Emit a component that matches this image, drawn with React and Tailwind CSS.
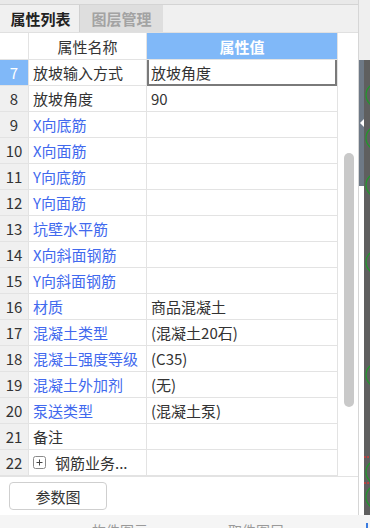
import React from "react";

const rows = [
  { n: 7, name: "放坡输入方式", value: "放坡角度", selected: true },
  { n: 8, name: "放坡角度", value: "90" },
  { n: 9, name: "X向底筋", blue: true },
  { n: 10, name: "X向面筋", blue: true },
  { n: 11, name: "Y向底筋", blue: true },
  { n: 12, name: "Y向面筋", blue: true },
  { n: 13, name: "坑壁水平筋", blue: true },
  { n: 14, name: "X向斜面钢筋", blue: true },
  { n: 15, name: "Y向斜面钢筋", blue: true },
  { n: 16, name: "材质", value: "商品混凝土", blue: true },
  { n: 17, name: "混凝土类型", value: "(混凝土20石)", blue: true },
  { n: 18, name: "混凝土强度等级", value: "(C35)", blue: true },
  { n: 19, name: "混凝土外加剂", value: "(无)", blue: true },
  { n: 20, name: "泵送类型", value: "(混凝土泵)", blue: true },
  { n: 21, name: "备注" },
  { n: 22, name: "钢筋业务...", expand: true },
];

const ExpandIcon = () => (
  <svg width="13" height="13" viewBox="0 0 13 13" className="shrink-0">
    <rect x="0.5" y="0.5" width="12" height="12" rx="2" fill="white" stroke="#8a8a8a" />
    <line x1="3.5" y1="6.5" x2="9.5" y2="6.5" stroke="#444" />
    <line x1="6.5" y1="3.5" x2="6.5" y2="9.5" stroke="#444" />
  </svg>
);

const Row = ({ row }) => (
  <div className="grid grid-cols-[29px_118px_190px] h-[26px] border-b border-[#e3e3e3]">
    <div
      className={
        row.selected
          ? "flex items-center justify-center bg-[#80b8f8] text-white border-r border-[#e3e3e3]"
          : "flex items-center justify-center bg-[#f0f0f0] text-[#333] border-r border-[#e3e3e3]"
      }
    >
      {row.n}
    </div>
    <div
      className={
        "flex items-center gap-[9px] pl-[4px] border-r border-[#e3e3e3] whitespace-nowrap overflow-hidden " +
        (row.blue ? "text-[#4169ee]" : "text-[#333]")
      }
    >
      {row.expand && <ExpandIcon />}
      {row.name}
    </div>
    <div
      className={
        row.selected
          ? "flex items-center pl-[2px] text-[#333] border-x-2 border-b-2 border-[#7a7a7a] -mb-px"
          : "flex items-center pl-[4px] text-[#333]"
      }
    >
      {row.value}
    </div>
  </div>
);

const Canvas = () => (
  <svg width="6" height="455" viewBox="0 0 6 455" className="block">
    {[35, 78, 125, 202, 315, 412, 437].map((cy) => (
      <circle key={cy} cx="14" cy={cy} r="12" fill="none" stroke="#1f9a2a" strokeWidth="1.2" />
    ))}
    <line x1="0" y1="397" x2="6" y2="397" stroke="#d23a3a" strokeDasharray="2 1" strokeWidth="1.5" />
    <line x1="0" y1="423" x2="6" y2="423" stroke="#d23a3a" strokeDasharray="2 1" strokeWidth="1.5" />
  </svg>
);

export default function App() {
  return (
    <div
      className="w-[370px] h-[528px] overflow-hidden bg-white flex flex-col text-[15px] leading-none"
      style={{ fontFamily: '"Noto Sans CJK SC", "Noto Sans", sans-serif' }}
    >
      <div className="flex h-[515px]">
        {/* property panel */}
        <div className="w-[359px] flex flex-col border-r border-[#d6d6d6]">
          <div className="h-[5px] bg-[#e9e9e9] border-b border-[#d4d4d4]" />
          <div className="h-[28px] bg-[#f0f0f0] flex pl-[2px] border-b border-[#e0e0e0]">
            <div className="w-[78px] flex items-center justify-center font-bold text-[#222] border-r border-[#d0d0d0]">
              属性列表
            </div>
            <div className="w-[83px] flex items-center justify-center font-bold text-[#a3a3a3] bg-[#dedede]">
              图层管理
            </div>
          </div>

          <div className="h-[444px] flex border-b border-[#e3e3e3]">
            <div className="w-[337px] flex flex-col overflow-hidden">
              <div className="grid grid-cols-[29px_118px_190px] h-[27px] shrink-0 border-b border-[#e3e3e3]">
                <div className="bg-white border-r border-[#e3e3e3]" />
                <div className="flex items-center justify-center text-[#333] border-r border-[#e3e3e3]">
                  属性名称
                </div>
                <div className="flex items-center justify-center bg-[#80b8f8] text-white font-bold">
                  属性值
                </div>
              </div>
              {rows.map((row) => (
                <Row key={row.n} row={row} />
              ))}
            </div>
            <div className="w-[21px] border-l border-[#e3e3e3] pt-[120px] pl-[6px]">
              <div className="w-[10px] h-[254px] rounded-full bg-[#c9c9c9]" />
            </div>
          </div>

          <div className="flex-1 pt-[5px] pl-[9px]">
            <button className="w-[98px] h-[28px] border border-[#cfcfcf] rounded-[4px] bg-white text-[#333] text-[15px]">
              参数图
            </button>
          </div>
        </div>

        {/* drawing area behind */}
        <div className="w-[11px] flex flex-col">
          <div className="h-[60px] bg-[#efefef]" />
          <div className="flex flex-1">
            <div className="w-[5px] flex flex-col">
              <div className="h-[126px] bg-[#6e7986] flex items-center justify-center">
                <div className="w-0 h-0 border-y-[4px] border-y-transparent border-r-[4px] border-r-white" />
              </div>
              <div className="flex-1 bg-white" />
            </div>
            <div className="flex-1 bg-[#5f5f5f]">
              <Canvas />
            </div>
          </div>
        </div>
      </div>

      <div className="h-[13px] bg-[#f5f5f5] flex pt-[8px] overflow-hidden text-[14px] text-[#9a9a9a]">
        <span className="ml-[92px]">构件图元</span>
        <span className="ml-[80px]">取件图层</span>
        <span className="ml-auto w-[2px] h-[10px] bg-[#3a7be0] mr-[2px]" />
      </div>
    </div>
  );
}
